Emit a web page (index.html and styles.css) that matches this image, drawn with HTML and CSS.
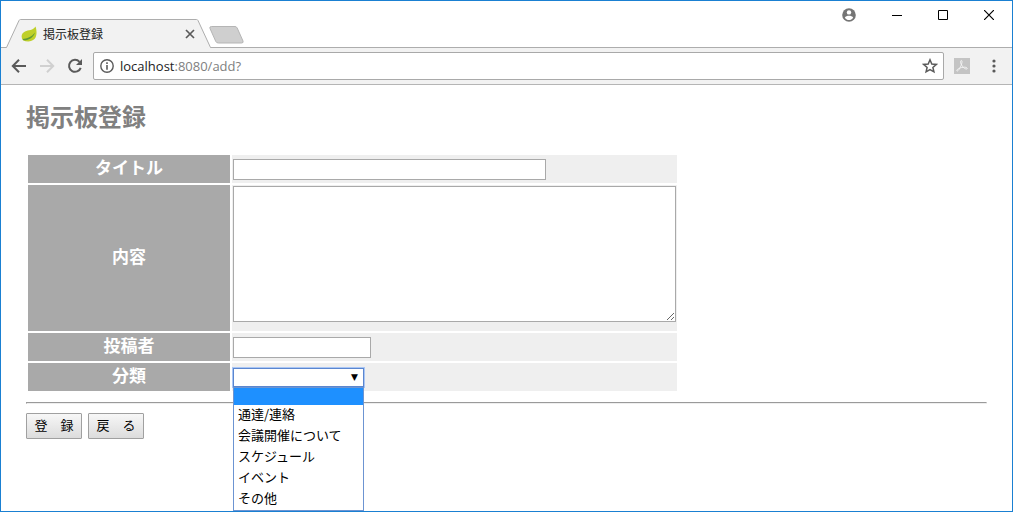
FILE: index.html
```html
<!DOCTYPE html>
<html lang="ja">
<head>
    <meta charset="UTF-8">
    <title>掲示板登録</title>
    <link rel="stylesheet" href="styles.css">
</head>
<body>
<div class="window">
    <header class="tab-strip">
        <div class="tab">
            <svg class="tab-shape" width="207" height="29" viewBox="0 0 207 29">
                <path d="M0 28.500H1.500L14 1.500Q14.500 .5 15.500 .5H191.500Q192.500 .5 193 1.500L205.500 28.500H207V29H0Z" fill="#f2f2f2"/>
                <path d="M0 28.500H1.500L14 1.500Q14.500 .5 15.500 .5H191.500Q192.500 .5 193 1.500L205.500 28.500H207" fill="none" stroke="#adadad"/>
                <path d="M3 28.500H204" stroke="#f2f2f2"/>
            </svg>
            <svg class="tab-leaf" width="16" height="16" viewBox="0 0 16 16">
                <path d="M14.500 .5C15.800 4 16.300 10 13.500 13C10.500 16 5.500 16 2 14.200C-.5 11 .5 7 4 5.400C7.500 3.900 12 4.500 14.500 .5Z" fill="#bfd02a"/>
                <path d="M1.500 13C6 12.800 10.500 11 14 6.500C12.500 11.500 8 14.500 2.500 14.300Z" fill="#5f9c35"/>
            </svg>
            <span class="tab-title">掲示板登録</span>
            <button type="button" class="icon-button tab-close" aria-label="タブを閉じる">
                <svg width="10" height="10" viewBox="0 0 10 10"><path d="M1 1L9 9M9 1L1 9" stroke="#5a5a5a" stroke-width="1.700"/></svg>
            </button>
        </div>
        <button type="button" class="icon-button new-tab" aria-label="新しいタブ">
            <svg width="35" height="18" viewBox="0 0 35 18"><path d="M2.500 .5H26Q27.500 .5 28.200 2L34 15Q34.700 17 32.500 17H9.500Q7.500 17 6.800 15.500L1 2.500Q.2 .5 2.500 .5Z" fill="#cfcfcf" stroke="#b5b5b5"/></svg>
        </button>
        <div class="window-buttons">
            <button type="button" class="icon-button" aria-label="ユーザー">
                <svg width="14" height="14" viewBox="0 0 14 14">
                    <circle cx="7" cy="7" r="6.800" fill="#757575"/>
                    <circle cx="7" cy="4.400" r="2.200" fill="#fff"/>
                    <path d="M2.800 9.700C3.300 8.300 5.500 7.800 7 7.800S10.700 8.300 11.200 9.700C10 11.300 8.600 12 7 12S4 11.300 2.800 9.700Z" fill="#fff"/>
                </svg>
            </button>
            <button type="button" class="icon-button" aria-label="最小化">
                <svg width="10" height="10" viewBox="0 0 10 10"><path d="M0 5.500H10" stroke="#000"/></svg>
            </button>
            <button type="button" class="icon-button" aria-label="最大化">
                <svg width="10" height="10" viewBox="0 0 10 10"><path d="M.5 .5H9.500V9.500H.5Z" fill="none" stroke="#000"/></svg>
            </button>
            <button type="button" class="icon-button" aria-label="閉じる">
                <svg width="10" height="10" viewBox="0 0 10 10"><path d="M0 0L10 10M10 0L0 10" stroke="#000" stroke-width="1.200"/></svg>
            </button>
        </div>
    </header>

    <nav class="toolbar">
        <button type="button" class="icon-button" aria-label="戻る">
            <svg width="16" height="16" viewBox="0 0 16 16"><path d="M15 8H2M8 1.800L1.800 8L8 14.200" fill="none" stroke="#5a5a5a" stroke-width="2"/></svg>
        </button>
        <button type="button" class="icon-button" aria-label="進む" disabled>
            <svg width="16" height="16" viewBox="0 0 16 16"><path d="M1 8H14M8 1.800L14.200 8L8 14.200" fill="none" stroke="#d0d0d0" stroke-width="2"/></svg>
        </button>
        <button type="button" class="icon-button" aria-label="再読み込み">
            <svg width="16" height="16" viewBox="0 0 16 16">
                <path d="M12.500 3.800A6 6 0 1 0 13.700 9.800" fill="none" stroke="#5a5a5a" stroke-width="2"/>
                <path d="M15 1V7H9Z" fill="#5a5a5a"/>
            </svg>
        </button>
        <div class="address-bar">
            <svg width="14" height="14" viewBox="0 0 14 14">
                <circle cx="7" cy="7" r="6.200" fill="none" stroke="#5a5a5a" stroke-width="1.400"/>
                <path d="M7 3.200V4.900M7 6V10.700" stroke="#5a5a5a" stroke-width="1.600"/>
            </svg>
            <span class="url"><span class="url-host">localhost</span>:8080/add?</span>
            <button type="button" class="icon-button" aria-label="ブックマーク">
                <svg width="16" height="16" viewBox="0 0 16 16"><path d="M8 1.800L9.800 6L14.300 6.400L10.900 9.400L11.900 13.800L8 11.500L4.100 13.800L5.100 9.400L1.700 6.400L6.200 6Z" fill="none" stroke="#5a5a5a" stroke-width="1.500"/></svg>
            </button>
        </div>
        <div class="extensions">
            <button type="button" class="icon-button" aria-label="PDF">
                <svg width="16" height="16" viewBox="0 0 16 16">
                    <path d="M0 0H16V16H0Z" fill="#c4c4c4"/>
                    <path d="M7.200 2.500C8.600 2.200 8 5.500 6.800 8.200C5.500 11 3.800 13.600 2.900 12.900C2 11.500 6.500 9.200 10.500 9.200C13.500 9.200 14 11 12.400 11C10 11 6.200 6.300 6.600 3.500Q6.700 2.600 7.200 2.500Z" fill="none" stroke="#f4f4f4"/>
                </svg>
            </button>
            <button type="button" class="icon-button" aria-label="メニュー">
                <svg width="16" height="16" viewBox="0 0 16 16" fill="#5a5a5a"><circle cx="8" cy="3" r="1.600"/><circle cx="8" cy="8" r="1.600"/><circle cx="8" cy="13" r="1.600"/></svg>
            </button>
        </div>
    </nav>

    <main class="page">
        <h1>掲示板登録</h1>
        <form action="#" method="post">
            <table class="form-table">
                <tr>
                    <th><label for="title">タイトル</label></th>
                    <td><input type="text" class="title-input" id="title" name="title"></td>
                </tr>
                <tr>
                    <th><label for="content">内容</label></th>
                    <td class="content-cell"><textarea id="content" name="content"></textarea></td>
                </tr>
                <tr>
                    <th><label for="author">投稿者</label></th>
                    <td><input type="text" class="author-input" id="author" name="author"></td>
                </tr>
                <tr>
                    <th><label for="category">分類</label></th>
                    <td>
                        <div class="category">
                            <select id="category" name="category">
                                <option value=""></option>
                                <option value="1">通達/連絡</option>
                                <option value="2">会議開催について</option>
                                <option value="3">スケジュール</option>
                                <option value="4">イベント</option>
                                <option value="5">その他</option>
                            </select>
                            <ul class="category-list" role="listbox" aria-label="分類">
                                <li class="selected" role="option" aria-selected="true"></li>
                                <li role="option">通達/連絡</li>
                                <li role="option">会議開催について</li>
                                <li role="option">スケジュール</li>
                                <li role="option">イベント</li>
                                <li role="option">その他</li>
                            </ul>
                        </div>
                    </td>
                </tr>
            </table>
            <hr>
            <div class="actions">
                <button type="submit" class="form-button">登　録</button>
                <button type="button" class="form-button">戻　る</button>
            </div>
        </form>
    </main>
</div>
</body>
</html>
```

FILE: styles.css
```css
* {
    box-sizing: border-box;
}

body {
    margin: 0;
    font-family: "Noto Sans CJK JP", sans-serif;
    background-color: #fff;
}

svg {
    display: block;
}

.window {
    min-height: 100vh;
    border: 1px solid #1a80d2;
}

.icon-button {
    padding: 0;
    border: none;
    background: none;
}

/* タブ */
.tab-strip {
    display: flex;
    align-items: flex-end;
    height: 47px;
    border-bottom: 1px solid #adadad;
}

.tab {
    position: relative;
    display: flex;
    align-items: center;
    width: 207px;
    height: 29px;
    margin: 0 0 -1px 4px;
    padding: 0 17px 0 16px;
}

.tab-shape {
    position: absolute;
    top: 0;
    left: 0;
}

.tab-leaf,
.tab-title,
.tab-close {
    position: relative;
}

.tab-title {
    flex: 1;
    margin-left: 6px;
    font-size: 12px;
    line-height: 16px;
    color: #222;
}

.new-tab {
    margin-bottom: 3px;
    margin-left: -3px;
}

.window-buttons {
    display: flex;
    align-items: center;
    align-self: flex-start;
    gap: 36px;
    height: 28px;
    margin-left: auto;
    padding-right: 18px;
}

/* ツールバー */
.toolbar {
    display: flex;
    align-items: center;
    gap: 12px;
    height: 37px;
    padding: 0 10px;
    background-color: #f2f2f2;
    border-bottom: 1px solid #b5b5b5;
}

.address-bar {
    display: flex;
    flex: 1;
    align-items: center;
    height: 28px;
    margin: 0 -2px;
    padding: 0 5px 0 6px;
    background-color: #fff;
    border: 1px solid #a9a9a9;
    border-radius: 2px;
}

.url {
    flex: 1;
    margin-left: 6px;
    font-family: "Open Sans", sans-serif;
    font-size: 13px;
    line-height: 18px;
    color: #808080;
}

.url-host {
    color: #222;
}

.extensions {
    display: flex;
    gap: 16px;
}

/* 登録フォーム */
.page {
    padding: 13px 25px 0;
}

h1 {
    margin: 0 0 19px;
    font-size: 24px;
    line-height: 36px;
    color: #808080;
}

.form-table {
    width: 653px;
    max-width: 100%;
    border-spacing: 2px;
}

.form-table th {
    width: 202px;
    padding: 0 0 4px;
    font-size: 17px;
    line-height: 24px;
    color: #fff;
    background-color: #a9a9a9;
}

.form-table td {
    height: 28px;
    padding: 0 1px;
    background-color: #efefef;
}

.form-table .content-cell {
    padding: 1px 1px 9px;
}

input,
textarea {
    display: block;
    border: 1px solid #a9a9a9;
    font-size: 13px;
}

input {
    height: 21px;
}

.title-input {
    width: 313px;
}

.author-input {
    width: 138px;
}

textarea {
    width: 100%;
    height: 136px;
}

.category {
    position: relative;
    width: 131px;
}

select {
    display: block;
    width: 100%;
    height: 19px;
    padding: 0 5px;
    appearance: none;
    border: 1px solid #5b86cf;
    border-radius: 0;
    outline: 1px solid #a9c6f5;
    background-color: #fff;
}

.category::after {
    content: "▼";
    position: absolute;
    top: 0;
    right: 6px;
    font-family: "DejaVu Sans", sans-serif;
    font-size: 9px;
    line-height: 18px;
    pointer-events: none;
}

.category-list {
    position: absolute;
    top: 100%;
    left: 0;
    width: 100%;
    margin: 0;
    padding: 0;
    list-style: none;
    font-size: 13px;
    background-color: #fff;
    border: 1px solid #6c94d2;
}

.category-list li {
    height: 21px;
    padding-left: 4px;
    line-height: 17px;
    white-space: nowrap;
}

.category-list .selected {
    height: 17px;
    background-color: #1e90ff;
}

hr {
    margin: 9px 0;
    border: 1px inset #eee;
}

.actions {
    display: flex;
    gap: 6px;
}

.form-button {
    width: 56px;
    height: 26px;
    padding: 0 0 2px;
    border: 1px solid #a0a0a0;
    border-radius: 1px;
    background: linear-gradient(#f7f7f7, #dcdcdc);
    font-family: inherit;
    font-size: 13px;
    line-height: 20px;
    color: #000;
}
```
